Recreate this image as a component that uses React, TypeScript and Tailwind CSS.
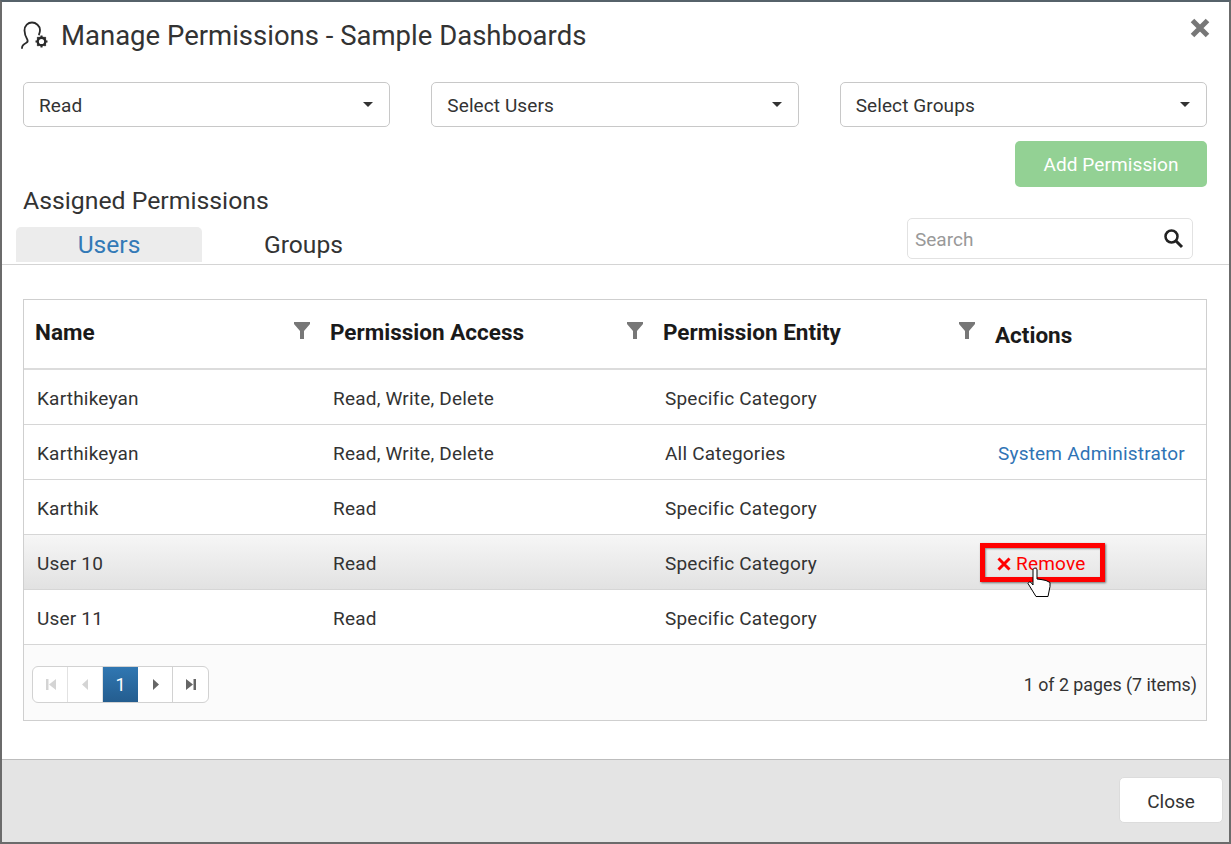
const rows = [
  { name: "Karthikeyan", access: "Read, Write, Delete", entity: "Specific Category" },
  { name: "Karthikeyan", access: "Read, Write, Delete", entity: "All Categories", admin: true },
  { name: "Karthik", access: "Read", entity: "Specific Category" },
  { name: "User 10", access: "Read", entity: "Specific Category", hover: true },
  { name: "User 11", access: "Read", entity: "Specific Category" },
];

function Caret() {
  return <span className="h-0 w-0 border-x-[5px] border-t-[5px] border-x-transparent border-t-[#333]" />;
}

function Dropdown({ label }: { label: string }) {
  return (
    <div className="flex h-[45px] items-center justify-between rounded-[5px] border border-[#c8c8c8] bg-white pl-[15px] pr-[16px] text-[19px] tracking-[0.1px] text-[#333]">
      <span className="mt-[4px]">{label}</span>
      <Caret />
    </div>
  );
}

function HeaderCell({ label, left }: { label: string; left: string }) {
  return (
    <div className={`flex items-center justify-between ${left}`}>
      <span className="-mt-[2px] text-[22.500px] font-bold text-[#1a1a1a]">{label}</span>
      <svg width="16" height="17" viewBox="0 0 16 17" className="-mt-[7px] shrink-0">
        <path d="M0 0h16v2L10 9v8H6V9L0 2z" fill="#777" />
      </svg>
    </div>
  );
}

function PagerBtn({ children, last }: { children: React.ReactNode; last?: boolean }) {
  return (
    <div className={`flex h-full w-[35px] items-center justify-center ${last ? "" : "border-r border-[#e2e2e2]"}`}>
      {children}
    </div>
  );
}

function HandCursor() {
  return (
    <svg width="26" height="34" viewBox="0 0 26 34" className="absolute left-[1025px] top-[564px]">
      <path
        d="M6 4c0-2.500 4-2.500 4 0v9l4 .5 5 1 4 2v4l-2 10H9L1 17.500c.5-1.500 2-2 3-1l2 2.500z"
        fill="#fff"
        stroke="#000"
        strokeWidth="1"
      />
    </svg>
  );
}

export default function App() {
  return (
    <div className="relative flex h-[844px] w-[1231px] flex-col overflow-hidden border-2 border-x-[#6b6b6b] border-b-[#6b6b6b] border-t-[#56626a] bg-white font-['Roboto',sans-serif] text-[#333]">
      {/* title bar */}
      <div className="flex h-[68px] items-center justify-between pl-[18px] pr-[18px]">
        <div className="flex items-center gap-[11px]">
          <svg width="30" height="30" viewBox="0 0 30 30" fill="none">
            <path
              d="M2 27c0-3 2-4 4-5 1.500-.7 2-1.500 1.500-3C6 16.500 4.500 14 4.500 9.500c0-5 3.500-8 7.500-8s8 3.500 8 7.500c0 1.500-.3 3-1 4.500"
              stroke="#2a2a2a"
              strokeWidth="1.800"
              strokeLinecap="round"
            />
            <circle cx="21.500" cy="20.500" r="3.800" stroke="#2a2a2a" strokeWidth="2.400" />
            <path
              d="M21.500 14.500v2.500M21.500 24v2.500M15.500 20.500H18M25 20.500h2.500M17.300 16.300l1.700 1.700M24 23l1.700 1.700M17.300 24.700L19 23M24 18l1.700-1.700"
              stroke="#2a2a2a"
              strokeWidth="2"
            />
          </svg>
          <span className="text-[27.500px] text-[#333]">Manage Permissions - Sample Dashboards</span>
        </div>
        <svg width="22" height="22" viewBox="0 0 22 22" className="-mt-[16px]">
          <path d="M3.500 3.500l15 15M18.500 3.500l-15 15" stroke="#777" strokeWidth="5" />
        </svg>
      </div>

      {/* selects */}
      <div className="mt-[12px] grid grid-cols-3 gap-x-[41px] pl-[21px] pr-[22px]">
        <Dropdown label="Read" />
        <Dropdown label="Select Users" />
        <Dropdown label="Select Groups" />
      </div>

      <div className="mt-[14px] flex justify-end pr-[22px]">
        <div className="flex h-[46px] w-[192px] items-center justify-center rounded-[5px] bg-[#93d194] pt-[2px] text-[19px] tracking-[0.1px] text-white">
          Add Permission
        </div>
      </div>

      {/* tabs + search */}
      <div className="relative h-[78px] border-b border-[#d4d4d4]">
        <div className="pl-[21px] text-[24.800px] leading-[28px] text-[#333]">Assigned Permissions</div>
        <div className="absolute bottom-[2px] left-[14px] flex h-[35px] items-center text-[24.600px]">
          <div className="flex h-full w-[186px] items-center justify-center rounded-t-[5px] bg-[#ececec] pt-[2px] text-[#337ab7]">
            Users
          </div>
          <div className="ml-[62px] mt-[2px] text-[#333]">Groups</div>
        </div>
        <div className="absolute bottom-[5px] left-[905px] flex h-[41px] w-[286px] items-center justify-between rounded-[5px] border border-[#e2e2e2] bg-white pl-[7px] pr-[8px] text-[19px] text-[#999]">
          <span className="mt-[4px]">Search</span>
          <svg width="21" height="21" viewBox="0 0 21 21" fill="none">
            <circle cx="8.500" cy="8.500" r="6" stroke="#222" strokeWidth="2.500" />
            <path d="M13 13l6 6" stroke="#222" strokeWidth="3" />
          </svg>
        </div>
      </div>

      {/* table */}
      <div className="ml-[21px] mr-[22px] mt-[34px] border border-[#cfcfcf] text-[19px] tracking-[0.2px]">
        <div className="grid h-[70px] grid-cols-[295px_332px_332px_1fr] border-b-2 border-[#dcdcdc] tracking-normal">
          <HeaderCell label="Name" left="pl-[11px] pr-[9px]" />
          <HeaderCell label="Permission Access" left="pl-[11px] pr-[8px]" />
          <HeaderCell label="Permission Entity" left="pl-[12px] pr-[8px]" />
          <div className="flex items-center pl-[12px] pt-[4px] text-[22.500px] font-bold text-[#1a1a1a]">Actions</div>
        </div>
        {rows.map((r, i) => (
          <div
            key={i}
            className={`grid h-[55px] grid-cols-[295px_332px_332px_1fr] items-center border-b border-[#d6d6d6] ${
              r.hover ? "bg-gradient-to-b from-[#f6f6f6] to-[#e2e2e2]" : "bg-white"
            }`}
          >
            <div className="mt-[4px] pl-[13px]">{r.name}</div>
            <div className="mt-[4px] pl-[14px]">{r.access}</div>
            <div className="mt-[4px] pl-[14px]">{r.entity}</div>
            <div className="pl-[15px]">
              {r.admin && <div className="mt-[4px] text-[#2f73b5]">System Administrator</div>}
              {r.hover && (
                <div className="-ml-[18px] flex h-[39px] w-[125px] items-center gap-[5px] border-[5px] border-[#ff0000] pl-[12px] pt-[4px] text-[#f00] shadow-[1px_1px_2px_rgba(0,0,0,0.5),inset_1px_1px_2px_rgba(0,0,0,0.4)]">
                  <svg width="14" height="14" viewBox="0 0 14 14">
                    <path d="M1.500 1.500l11 11M12.500 1.500l-11 11" stroke="#f00" strokeWidth="3" />
                  </svg>
                  <span>Remove</span>
                </div>
              )}
            </div>
          </div>
        ))}
        {/* pager */}
        <div className="flex h-[75px] items-center justify-between bg-[#fbfbfb] pl-[8px] pr-[9px] pt-[4px] tracking-normal">
          <div className="flex h-[37px] items-center overflow-hidden rounded-[6px] border border-[#d2d2d2] bg-white">
            <PagerBtn>
              <svg width="10" height="11" viewBox="0 0 10 11" className="ml-[1px]">
                <path d="M0 0h2.500v11H0zM10 0v11L3 5.500z" fill="#d4d4d4" />
              </svg>
            </PagerBtn>
            <PagerBtn>
              <svg width="6" height="11" viewBox="0 0 6 11">
                <path d="M6 0v11L0 5.500z" fill="#d4d4d4" />
              </svg>
            </PagerBtn>
            <div className="flex h-full w-[35px] items-center justify-center bg-gradient-to-b from-[#3077b2] to-[#245d8f] text-[18px] text-white">
              1
            </div>
            <div className="flex h-full w-[35px] items-center justify-center border-r border-[#d2d2d2]">
              <svg width="6" height="11" viewBox="0 0 6 11" className="ml-[1px]">
                <path d="M0 0v11l6-5.500z" fill="#666" />
              </svg>
            </div>
            <PagerBtn last>
              <svg width="10" height="11" viewBox="0 0 10 11">
                <path d="M0 0v11l7-5.500zM7.500 0H10v11H7.500z" fill="#666" />
              </svg>
            </PagerBtn>
          </div>
          <span className="mt-[2px] text-[17.800px]">1 of 2 pages (7 items)</span>
        </div>
      </div>

      {/* footer */}
      <div className="mt-auto flex h-[83px] items-start justify-end border-t border-[#bdbdbd] bg-[#e4e4e4] pr-[6px] pt-[17px]">
        <div className="flex h-[46px] w-[104px] items-center justify-center rounded-[5px] border border-[#dcdcdc] bg-white pt-[4px] text-[19px] text-[#333]">
          Close
        </div>
      </div>

      <HandCursor />
    </div>
  );
}
